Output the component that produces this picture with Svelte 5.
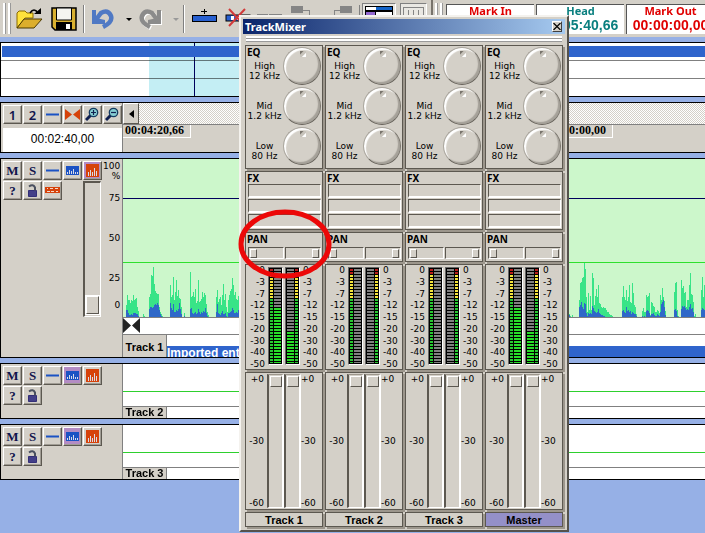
<script lang="ts">
  type Burst = { x: number; peak: number[]; body: number[] };

  const channels = [
    { name: 'Track 1', left: 58, right: 34, master: false },
    { name: 'Track 2', left: 0, right: 0, master: false },
    { name: 'Track 3', left: 0, right: 0, master: false },
    { name: 'Master', left: 58, right: 34, master: true },
  ];

  const bands = [
    { name: 'High', freq: '12 kHz' },
    { name: 'Mid', freq: '1.2 kHz' },
    { name: 'Low', freq: '80 Hz' },
  ];

  const meterScale = ['0', '-3', '-7', '-12', '-15', '-20', '-30', '-40', '-50'];
  const faderScale = ['+0', '-30', '-60'];

  const markers = [
    { name: 'Mark In', time: '00:00:00,00', head: false },
    { name: 'Head', time: '00:05:40,66', head: true },
    { name: 'Mark Out', time: '00:00:00,00', head: false },
  ];

  const bursts: Burst[] = [
    { x: 3, peak: [12, 22, 17, 17, 14, 17, 16, 22, 17, 18, 19, 10, 6], body: [7, 7, 4, 2, 2, 3, 2, 4, 4, 4, 3, 3, 1] },
    { x: 20, peak: [3, 1], body: [0, 0] },
    { x: 26, peak: [20, 23, 42, 41, 50, 33, 26, 24, 23, 23, 10, 5, 3, 1], body: [8, 10, 10, 9, 10, 12, 13, 12, 14, 12, 7, 3, 1, 0] },
    { x: 47, peak: [32, 20, 22, 40, 17, 25, 37, 21, 27, 19, 18, 10], body: [14, 9, 7, 13, 5, 5, 7, 6, 8, 14, 8, 3] },
    { x: 61, peak: [4], body: [1] },
    { x: 67, peak: [45, 20, 21, 25, 20, 28, 14, 16, 37, 15, 16, 18, 25, 20, 24, 22, 13, 5, 2], body: [8, 9, 4, 3, 4, 5, 3, 4, 8, 5, 3, 5, 4, 6, 5, 9, 4, 1, 0] },
    { x: 93, peak: [20, 27, 15, 18, 20, 12, 22, 33, 17, 23, 10, 5, 17, 22, 26, 28, 39, 32, 22, 25, 18, 17, 21], body: [5, 13, 4, 3, 2, 4, 6, 3, 3, 4, 1, 0, 4, 4, 5, 6, 9, 7, 4, 4, 5, 4, 7] },
    { x: 446, peak: [3, 1, 0, 2], body: [2, 0, 0, 0] },
    { x: 456, peak: [17, 34, 35, 39, 40, 54, 48, 20, 5, 24, 7, 21, 7, 44, 39, 12, 21, 28, 20, 32, 14, 13, 10, 9, 10, 9, 9, 7, 5, 5, 3, 2, 2, 1], body: [10, 12, 15, 10, 8, 14, 13, 4, 1, 4, 3, 4, 3, 11, 9, 6, 5, 4, 5, 8, 4, 3, 2, 2, 1, 1, 0, 0, 0, 0, 0, 0, 0, 0] },
    { x: 499, peak: [20, 31, 20, 17, 27, 16, 20, 32, 15, 14, 34, 24, 12, 10, 3], body: [6, 7, 5, 4, 10, 6, 7, 5, 6, 3, 5, 4, 3, 3, 1] },
    { x: 519, peak: [6, 9, 5, 5, 22, 20, 21, 24, 2, 15, 14, 11, 10, 5, 5, 7, 6, 4, 22, 17, 29, 20, 16, 6], body: [1, 0, 1, 0, 6, 7, 6, 4, 1, 3, 3, 4, 2, 1, 1, 3, 2, 1, 5, 13, 15, 17, 10, 2] },
    { x: 551, peak: [25, 34, 35, 7, 1], body: [7, 8, 6, 1, 0] },
    { x: 558, peak: [37, 29, 31, 24, 25, 10, 17, 17, 32, 44, 23, 22, 15, 1, 3], body: [8, 11, 10, 11, 9, 7, 8, 7, 10, 13, 8, 9, 5, 0, 0] },
    { x: 578, peak: [27, 40, 20, 32], body: [7, 9, 8, 7] },
  ];

  function bars(part: 'peak' | 'body') {
    return bursts
      .map((b) => b[part].map((h, i) => (h ? `M${b.x + i} 158v-${h}h1v${h}z` : '')).join(''))
      .join('');
  }
</script>

{#snippet line()}
  <svg width="15" height="15"><path d="M1 7.500h13" stroke="#1b52c4" stroke-width="2" /></svg>
{/snippet}

{#snippet spectrum(color: string, tall: boolean)}
  <svg width="15" height="15" shape-rendering="crispEdges">
    <rect x="1" y={tall ? 1 : 3} width="13" height={tall ? 13 : 9} fill={color} />
    <path
      d={tall
        ? 'M3.5 13V9M5.5 13V7M7.5 13V9M9.5 13V5M11.5 13V8'
        : 'M2.5 11V9M4.5 11V7M6.5 11V8M8.5 11V6M10.5 11V9M12.5 11V9'}
      stroke="#d9dbe8"
    />
  </svg>
{/snippet}

{#snippet lock()}
  <svg width="15" height="15">
    <path d="M3.500 7.500h8v6h-8z" fill="#433f88" stroke="#332f78" />
    <path d="M4 3.500q4-3 6 1v3" fill="none" stroke="#4a5060" stroke-width="2" />
  </svg>
{/snippet}

{#snippet lens(plus: boolean)}
  <svg width="15" height="15">
    <path d="M1 13l5-5" stroke="#102050" stroke-width="3" />
    <circle cx="8.500" cy="5.500" r="4.200" fill="#86cdd2" stroke="#163b60" stroke-width="1.300" />
    <path d={plus ? 'M6 5.500h5M8.500 3v5' : 'M6 5.500h5'} stroke="#102050" stroke-width="1.200" />
  </svg>
{/snippet}

{#snippet trackButtons(active: string)}
  <button class="btn letter" aria-label="Mute">M</button>
  <button class="btn letter" aria-label="Solo">S</button>
  <button class="btn" aria-label="Line view">{@render line()}</button>
  <button class="btn" class:active={active === 'wave'} aria-label="Wave view">{@render spectrum('#1b52c4', false)}</button>
  <button class="btn" class:active={active === 'level'} aria-label="Level view">{@render spectrum('#d6420a', true)}</button>
  <button class="btn letter" aria-label="Help">?</button>
  <button class="btn" aria-label="Lock">{@render lock()}</button>
{/snippet}

<div class="app">
  <header class="toolbar">
    <span class="grip"></span>
    <button class="tool" aria-label="Open">
      <svg width="27" height="22">
        <path d="M1 20V5l2-2h6l2 2h6v5H9z" fill="#ffe23c" stroke="#8a6a00" />
        <path d="M1 20l7-9h18l-8 9z" fill="#dcae2c" stroke="#4c3a00" />
        <path d="M14 5q4-6 8 0" fill="none" stroke="#000" stroke-width="1.500" />
        <path d="M18 6h7V0z" fill="#000" />
      </svg>
    </button>
    <button class="tool" aria-label="Save">
      <svg width="26" height="24">
        <path d="M1 1h24v22H4l-3-3z" fill="#d8b030" stroke="#000" stroke-width="1.500" />
        <path d="M5.500 1h15v12h-15z" fill="#f5f5f0" stroke="#000" />
        <path d="M5 15h16v8H5z" fill="#000" />
        <path d="M15 17h4v5h-4z" fill="#fff" />
      </svg>
    </button>
    <span class="sep"></span>
    <button class="tool" aria-label="Undo">
      <svg width="24" height="22">
        <path d="M1 2h4v8l9 2v4H1z" fill="#5079c4" />
        <path d="M4 13l6-8q7-4 10 3 2 6-8 11" fill="none" stroke="#5079c4" stroke-width="4.500" />
      </svg>
    </button>
    <span class="caret"></span>
    <button class="tool" aria-label="Redo">
      <svg width="24" height="22">
        <path d="M24 3h-4v8l-9 2v4h13z" fill="#fff" />
        <path d="M21 14l-6-8Q8 2 5 9q-2 6 8 11" fill="none" stroke="#fff" stroke-width="4.500" />
        <path d="M23 2h-4v8l-9 2v4h13z" fill="#8b8b8b" />
        <path d="M20 13l-6-8Q7 1 4 8q-2 6 8 11" fill="none" stroke="#8b8b8b" stroke-width="4.500" />
      </svg>
    </button>
    <span class="caret dim"></span>
    <span class="sep"></span>
    <button class="tool" aria-label="Add track">
      <svg width="26" height="22" shape-rendering="crispEdges">
        <path d="M13 1v5M10 3.500h6" stroke="#000" />
        <rect x="1" y="7" width="24" height="6" fill="#2860d0" stroke="#000" />
      </svg>
    </button>
    <button class="tool" aria-label="Delete track">
      <svg width="26" height="22">
        <rect x="1" y="7" width="24" height="6" fill="#2860d0" stroke="#000" />
        <path d="M6 8h3v4H6zM12 8h3v4h-3z" fill="#fff" />
        <path d="M4 1l16 17M20 1L4 18" stroke="#d23a3a" stroke-width="2" />
      </svg>
    </button>
    <span class="ghost">
      <svg width="110" height="30" shape-rendering="crispEdges" aria-hidden="true">
        <path d="M5 12h11M17 12h13M39 4h11v6H39zM88 4h11v6H88z" fill="#858585" stroke="#858585" />
        <path d="M50 8h7v8M88 8h-6v8" fill="none" stroke="#858585" />
        <path d="M107.500 3v20" stroke="#808080" />
      </svg>
    </span>
    <button class="toggle" aria-label="Track list">
      <svg width="28" height="22" shape-rendering="crispEdges">
        <rect width="28" height="22" fill="#000" />
        <path d="M1 1h10v3H1zM11 6h16v3H11z" fill="#fff" />
        <path d="M11 1h16v3H11z" fill="#1464c8" />
        <path d="M1 6h9v3H1z" fill="#9468d0" />
      </svg>
    </button>
    <button class="toggle" aria-label="Mixer">
      <svg width="21" height="22" shape-rendering="crispEdges">
        <path d="M0 1h21M.5 1v20M5.500 4v18M10.500 4v18M15.500 4v18M20.500 1v20" stroke="#858585" />
      </svg>
    </button>
    <span class="divider"></span>
    <span class="grip short"></span>
    {#each markers as m}
      <div class="marker" class:head={m.head}>
        <span class="marker-name">{m.name}</span>
        <span class="marker-time">{m.time}</span>
      </div>
    {/each}
  </header>

  <section class="panel overview">
    <div class="overview-row"><span class="clip"></span></div>
    <div class="overview-row"></div>
    <div class="overview-row"></div>
    <div class="range"></div>
  </section>

  <section class="panel timeline">
    <div class="side">
      <div class="buttons">
        <button class="btn number">1</button>
        <button class="btn number">2</button>
        <button class="btn" aria-label="Line">{@render line()}</button>
        <button class="btn" aria-label="Snap">
          <svg width="15" height="15"><path d="M0 2l7 5.500L0 13zM15 2L8 7.500 15 13z" fill="#d6420a" /></svg>
        </button>
        <button class="btn" aria-label="Zoom in">{@render lens(true)}</button>
        <button class="btn" aria-label="Zoom out">{@render lens(false)}</button>
      </div>
      <div class="clock">00:02:40,00</div>
    </div>
    <div class="ruler">
      <div class="scroll">
        <button class="scroll-btn" aria-label="Scroll left">
          <svg width="5" height="8"><path d="M5 0v8L0 4z" fill="#000" /></svg>
        </button>
      </div>
      <div class="stamps">
        <span class="stamp">00:04:20,66</span>
        <span class="stamp">00:00:00,00</span>
      </div>
    </div>
  </section>

  <section class="panel track">
    <div class="side wide">
      <div class="buttons">
        {@render trackButtons('level')}
        <button class="btn" aria-label="Envelope">
          <svg width="15" height="15" shape-rendering="crispEdges">
            <rect x="0" y="4" width="15" height="6" fill="#d6420a" />
            <path d="M2 8.500h3M6 8.500h3M11 8.500h2M2 5.500h1M5 5.500h3M10 5.500h3" stroke="#f5d9c8" />
          </svg>
        </button>
        <input class="volume" type="range" aria-label="Track 1 volume" min="0" max="100" value="0" />
      </div>
      <div class="percent">
        <span>100</span><span>%</span><span>75</span><span>50</span><span>25</span><span>0</span>
      </div>
    </div>
    <div class="lane">
      <svg class="wave" viewBox="0 0 582 158" preserveAspectRatio="none" shape-rendering="crispEdges">
        <rect width="582" height="158" fill="#ccf7cb" />
        <path d="M0 39.500h582" stroke="#00005c" />
        <path d="M0 103.500h582" stroke="#2ee02e" />
        <path d={bars('peak')} fill="#38e487" />
        <path d={bars('body')} fill="#2f68c8" />
      </svg>
      <div class="fades">
        <svg width="17" height="15"><path d="M0 0l8 7.500L0 15zM17 0L9 7.500 17 15z" fill="#222" /></svg>
      </div>
      <div class="footer tall">
        <span class="track-name">Track 1</span>
        <span class="region">Imported ent</span>
      </div>
    </div>
  </section>

  {#each ['Track 2', 'Track 3'] as name}
    <section class="panel track">
      <div class="side">
        <div class="buttons">{@render trackButtons('wave')}</div>
      </div>
      <div class="lane">
        <div class="empty"></div>
        <div class="footer"><span class="track-name">{name}</span></div>
      </div>
    </section>
  {/each}

  <div class="mixer" role="dialog" aria-label="TrackMixer">
    <div class="titlebar">
      <span>TrackMixer</span>
      <button class="close" aria-label="Close">
        <svg width="8" height="7"><path d="M.5 0l7 7M7.500 0l-7 7" stroke="#000" stroke-width="1.200" /></svg>
      </button>
    </div>
    <div class="ridges"></div>
    <div class="channels">
      {#each channels as ch}
        <div class="channel">
          <div class="cell eq">
            <b class="caption">EQ</b>
            {#each bands as band}
              <div class="band">
                <span class="band-name">{band.name}<br />{band.freq}</span>
                <button class="knob" aria-label="{ch.name} {band.name}"></button>
              </div>
            {/each}
          </div>
          <div class="cell fx">
            <b class="caption">FX</b>
            <div class="slots">
              {#each [1, 2, 3] as slot}
                <button class="slot" aria-label="{ch.name} effect {slot}"></button>
              {/each}
            </div>
          </div>
          <div class="cell pan">
            <b class="caption">PAN</b>
            <div class="pan-row">
              <input type="range" aria-label="{ch.name} pan left" min="0" max="100" value="0" />
              <input type="range" aria-label="{ch.name} pan right" min="0" max="100" value="100" />
            </div>
          </div>
          <div class="cell levels">
            <div class="scale">{#each meterScale as s}<span>{s}</span>{/each}</div>
            <div class="meter">
              <i class="leds"></i>
              <i class="bar"><i class="fill" style="height: {ch.left}%"></i></i>
            </div>
            <div class="meter flip">
              <i class="leds"></i>
              <i class="bar"><i class="fill" style="height: {ch.right}%"></i></i>
            </div>
            <div class="scale right">{#each meterScale as s}<span>{s}</span>{/each}</div>
          </div>
          <div class="cell faders">
            <div class="scale">{#each faderScale as s}<span>{s}</span>{/each}</div>
            <input class="fader" type="range" aria-label="{ch.name} left fader" min="0" max="100" value="100" />
            <input class="fader" type="range" aria-label="{ch.name} right fader" min="0" max="100" value="100" />
            <div class="scale right">{#each faderScale as s}<span>{s}</span>{/each}</div>
          </div>
          <div class="cell name" class:master={ch.master}>{ch.name}</div>
        </div>
      {/each}
    </div>
    <svg class="ring" width="94" height="72" aria-hidden="true">
      <ellipse cx="47" cy="36" rx="44" ry="32" fill="none" stroke="#ec0808" stroke-width="5" />
    </svg>
  </div>
</div>

<style>
  :global(body) { margin: 0; background: #96b0e6; }

  .app {
    --face: #d4d0c8;
    --dark: #5c5850;
    --small: 9px/10px "DejaVu Sans", Verdana, sans-serif;
    position: relative;
    min-height: 100vh;
    overflow: hidden;
    font-family: "Liberation Sans", Arial, sans-serif;
    font-size: 11px;
    color: #000;
  }

  .app * { box-sizing: border-box; }
  svg { display: block; flex: none; }
  button { margin: 0; padding: 0; border: 0; background: none; font: inherit; color: inherit; }

  /* toolbar */
  .toolbar {
    display: flex;
    align-items: center;
    height: 37px;
    padding-left: 3px;
    margin-bottom: 5px;
    background: var(--face);
    overflow: hidden;
  }
  .toolbar > * { flex: none; }
  .grip {
    width: 7px; height: 31px; margin-right: 6px;
    border: solid #fff; border-width: 0 2px;
    box-shadow: 1px 0 0 #999, inset 1px 0 0 #999;
  }
  .grip.short { margin-right: 4px; }
  .sep { width: 2px; height: 28px; margin: 0 6px; border-left: 1px solid #808080; border-right: 1px solid #fff; }
  .divider { width: 2px; height: 37px; margin-right: 2px; background: #77736b; }
  .tool { margin-right: 8px; }
  .tool + .sep { margin-left: -2px; }
  .caret { margin: 2px 6px 0 3px; border: 3px solid transparent; border-top-color: #000; border-bottom: 0; }
  .caret.dim { border-top-color: #999; margin-right: -2px; }
  .ghost { align-self: flex-start; margin: 2px 0 0 -7px; }
  .toggle {
    align-self: flex-start;
    margin: 3px 4px 0 0; padding: 2px;
    border: 1px solid; border-color: #808080 #fff #fff #808080;
    background: #eae8e3;
  }
  .marker {
    width: 88px; height: 30px; margin-right: 2px;
    display: flex; flex-direction: column; align-items: center;
    background: #fff; color: #e00000;
    border-left: 1px solid #555; border-top: 1px solid #555;
    font-weight: 700;
  }
  .marker.head { color: #0a7f7f; }
  .marker-name { font: 700 11px/12px "Noto Sans", sans-serif; }
  .marker-time { font-size: 14px; line-height: 17px; }

  /* panels */
  .panel {
    position: relative;
    margin-bottom: 5px;
    border: 1px solid #000;
    border-right: 0;
    display: flex;
    background: #fff;
  }
  .overview { flex-direction: column; }
  .overview-row { height: 18px; border-bottom: 1px solid #808080; padding: 3px 0 3px 1px; }
  .overview-row:nth-child(3) { height: 17px; border: 0; }
  .clip { display: block; position: relative; z-index: 1; height: 11px; background: #2f64cc; }
  .range {
    position: absolute; top: 0; bottom: 0; left: 148px; width: 100px;
    background: linear-gradient(#00005c, #00005c) 45px 0 / 1px 100% no-repeat #c4eef4;
    mix-blend-mode: multiply;
  }

  .side { flex: none; width: 122px; padding: 2px 0 0 2px; background: var(--face); border-right: 1px solid #808080; }
  .side.wide { display: flex; }
  .buttons { display: grid; grid-template-columns: repeat(6, 20px); grid-auto-rows: 20px; }
  .track .buttons { grid-template-columns: repeat(5, 20px); align-content: start; }
  .btn {
    width: 19px; height: 19px;
    display: flex; align-items: center; justify-content: center;
    background: var(--face);
    border: 1px solid; border-color: #fff var(--dark) var(--dark) #fff;
    box-shadow: inset -1px -1px 0 #a09c94;
    color: #10144c;
  }
  .btn.active { background: #b48cc4; }
  .letter { font: 700 13px/16px "Liberation Serif", serif; }
  .number { font: 600 13px/16px "Noto Sans", sans-serif; }
  .clock { margin: 3px 0 0; height: 24px; background: #fff; text-align: center; font-size: 12px; line-height: 23px; }

  .ruler { flex: 1; min-width: 0; overflow: hidden; background: var(--face); }
  .scroll {
    height: 22px; border-bottom: 1px solid #808080;
    background: repeating-conic-gradient(#fff 0 25%, #d4d0c8 0 50%) 0 0 / 2px 2px;
  }
  .scroll-btn {
    width: 16px; height: 21px;
    display: flex; align-items: center; justify-content: center;
    background: var(--face);
    border: 1px solid; border-color: #fff var(--dark) var(--dark) #fff;
  }
  .stamps { display: flex; height: 27px; gap: 354px; }
  .stamp {
    flex: none; height: 13px; padding: 0 6px 0 2px;
    font: 700 12px/11px "Liberation Serif", serif;
    border: solid #fff; border-width: 0 1px 1px 0;
  }

  .volume {
    grid-column: 5; grid-row: 2 / span 7;
    margin: 0; width: 18px; height: 136px; padding: 2px;
    appearance: none; writing-mode: vertical-lr; direction: rtl;
    background: var(--face);
    border: 1px solid; border-width: 2px 1px 1px 2px; border-color: var(--dark) #fff #fff var(--dark);
  }
  .volume::-webkit-slider-thumb {
    appearance: none; width: 13px; height: 18px;
    background: var(--face);
    border: 1px solid; border-color: #fff var(--dark) var(--dark) #fff;
    box-shadow: 0 0 0 1px #fff;
  }
  .percent {
    flex: 1; margin-right: 2px;
    display: grid; grid-template-rows: 10px 10px 34px 46px 34px 20px; align-items: center;
    justify-items: end;
    font: var(--small);
  }

  .lane { flex: 1; min-width: 0; }
  .wave { width: 100%; height: 158px; }
  .fades { height: 18px; border: solid #808080; border-width: 1px 0; }
  .footer { display: flex; height: 11px; }
  .footer.tall { height: 22px; }
  .track-name {
    flex: none; width: 44px;
    background: var(--face); border-right: 1px solid #808080;
    font-size: 11px; font-weight: 700; line-height: 11px; text-align: center;
  }
  .tall .track-name { line-height: 24px; }
  .region {
    flex: 1; margin-top: 11px; overflow: hidden;
    background: #2f64cc; color: #fff;
    font-size: 12px; font-weight: 700; line-height: 14px;
  }
  .empty {
    height: 43px; border-bottom: 1px solid #808080;
    background: linear-gradient(#2ed02e, #2ed02e) 0 27px / 100% 1px no-repeat;
  }

  /* mixer window */
  .mixer {
    position: absolute; left: 239px; top: 15px; z-index: 2;
    width: 330px; padding: 2px 2px 3px;
    background: var(--face);
    border: 2px solid; border-color: #f4f2ee #55524c #55524c #f4f2ee;
  }
  .titlebar {
    display: flex; align-items: center; justify-content: space-between;
    height: 15px; padding: 0 3px 0 2px;
    background: linear-gradient(90deg, #0a246a, #a6caf0);
    color: #fff; font: 700 11px/15px "Noto Sans", sans-serif;
  }
  .close {
    width: 10px; height: 11px;
    display: flex; align-items: center; justify-content: center;
    background: var(--face);
    border: 1px solid; border-color: #fff #404040 #404040 #fff;
  }
  .ridges {
    height: 5px; margin: 2px 3px 4px;
    border: solid #fff; border-width: 2px 0;
    box-shadow: 0 1px 0 #999, inset 0 1px 0 #999;
  }
  .channels { display: grid; grid-template-columns: repeat(4, 1fr); gap: 2px; padding: 0 2px; }
  .channel { display: flex; flex-direction: column; gap: 2px; min-width: 0; }
  .cell { background: var(--face); border: 1px solid var(--dark); box-shadow: 2px 2px 0 #9c968c; }
  .caption { display: block; padding-left: 1px; font: 700 10px/12px "Noto Sans", sans-serif; }

  .eq { height: 124px; }
  .eq .caption { height: 0; }
  .band { display: flex; align-items: center; height: 40px; }
  .band-name { flex: 1; padding-top: 10px; text-align: center; font: var(--small); white-space: nowrap; }
  .knob {
    flex: none; width: 38px; height: 38px; margin-right: 1px;
    border-radius: 50%;
    border: 1px solid; border-color: #aaa69e #77736b #66625a #aaa69e;
    box-shadow: inset 2px 2px 1px #fff, inset -2px -2px 1px #a5a199;
    background:
      linear-gradient(135deg, #77736b 0 2px, #c8c4bc 3px 5px, #fff 6px) 16px 3px / 6px 6px no-repeat,
      var(--face);
  }

  .fx { height: 59px; }
  .slots { display: grid; gap: 1px; padding: 0 1px 0 2px; }
  .slot {
    height: 14px;
    border: 1px solid; border-width: 1px 1px 2px 1px; border-color: var(--dark) #fff #fff var(--dark);
  }

  .pan { height: 30px; }
  .pan .caption { line-height: 13px; }
  .pan-row { display: flex; gap: 1px; padding: 1px 1px 0 2px; }
  .pan-row input {
    flex: 1; min-width: 0; height: 12px; margin: 0; padding: 0 1px;
    appearance: none; background: var(--face);
    border: 1px solid; border-color: var(--dark) #fff #fff var(--dark);
  }
  .pan-row input::-webkit-slider-thumb {
    appearance: none; width: 7px; height: 9px; background: var(--face);
    border: 1px solid; border-color: #fff var(--dark) var(--dark) #fff;
  }

  .levels, .faders { display: grid; }
  .levels { height: 106px; grid-template-columns: 1fr 15px 15px 1fr; column-gap: 2px; }
  .faders { height: 138px; grid-template-columns: 1fr 17px 17px 1fr; padding: 1px 0; }
  .scale { display: flex; flex-direction: column; justify-content: space-between; text-align: right; font: var(--small); }
  .scale.right { text-align: left; }
  .levels .scale { padding-right: 1px; }
  .levels .scale.right { padding: 0 0 0 1px; }
  .faders .scale { padding-right: 3px; }
  .faders .scale.right { padding: 0; }

  .meter {
    display: flex; gap: 1px; margin: 2px 0 4px; padding: 1px;
    background: #000; border: 1px solid; border-color: #666 #fff #fff #666;
  }
  .meter.flip { flex-direction: row-reverse; }
  .leds, .bar { position: relative; overflow: hidden; }
  .leds { width: 3px; background: linear-gradient(#b81c1c 0 6px, #f4e43c 6px 30px, #28c832 30px); }
  .bar { flex: 1; background: #808080; }
  .fill { position: absolute; left: 0; right: 0; bottom: 0; background: #28dc28; }
  .leds::after, .bar::after {
    content: ""; position: absolute; inset: 0;
    background: repeating-linear-gradient(transparent 0 2px, #000 2px 3px);
  }

  .fader {
    margin: 0; width: 17px; height: 100%; padding: 1px 0;
    appearance: none; writing-mode: vertical-lr; direction: rtl;
    background: var(--face);
    border: 1px solid; border-width: 1px 2px 1px 2px; border-color: #9c968c #fff #fff var(--dark);
  }
  .fader::-webkit-slider-thumb {
    appearance: none; width: 12px; height: 11px;
    background: var(--face);
    border: 1px solid; border-color: #fff var(--dark) var(--dark) #fff;
  }

  .name { height: 15px; text-align: center; font-size: 11px; font-weight: 700; line-height: 14px; }
  .name.master { background: #9490c8; }

  .ring { position: absolute; left: -3px; top: 191px; }
</style>
